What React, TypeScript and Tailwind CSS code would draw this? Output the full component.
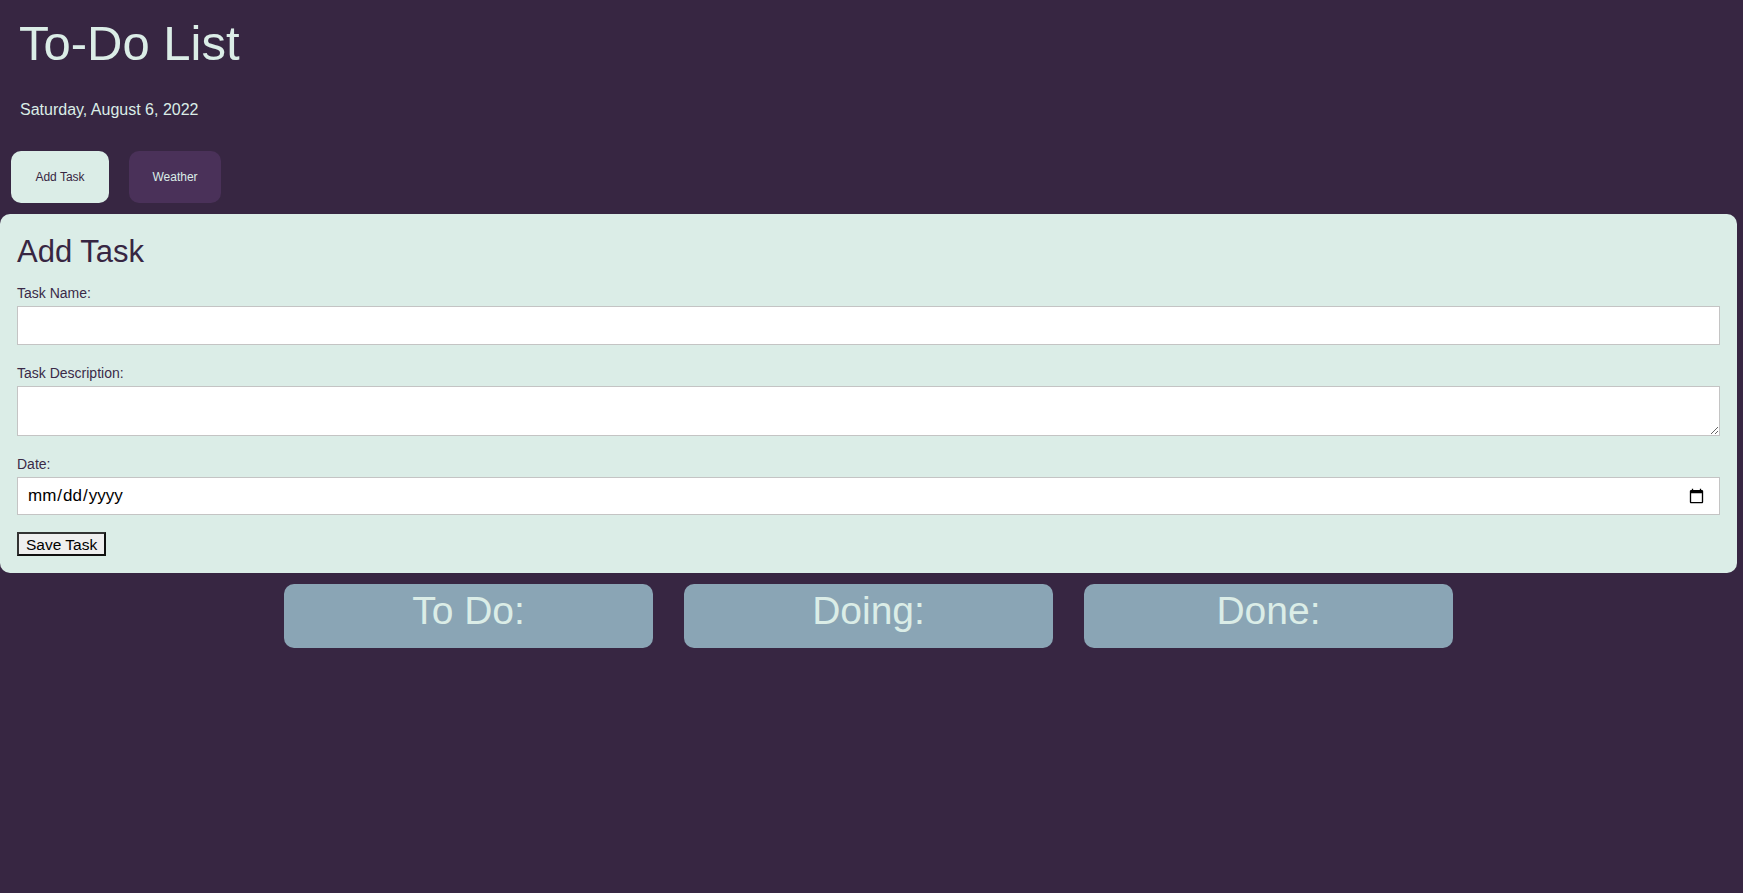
const font = { fontFamily: '"Liberation Sans", Arial, sans-serif' }

const columns = ['To Do:', 'Doing:', 'Done:']

function Field({ label, children, first }: { label: string; children: React.ReactNode; first?: boolean }) {
  return (
    <div className={first ? 'mt-[16px] flex flex-col' : 'mt-[20px] flex flex-col'}>
      <label className="text-[14px] leading-[16px] text-[#3a2a47]">{label}</label>
      <div className="mt-[5px]">{children}</div>
    </div>
  )
}

export default function App() {
  return (
    <div className="min-h-screen w-full bg-[#372642]" style={font}>
      <div className="w-[1737px] flex flex-col">
        <h1 className="mt-[15px] pl-[19px] text-[49px] leading-[56px] text-[#dbede7]">To-Do List</h1>
        <p className="mt-[30px] pl-[20px] text-[16px] leading-[18px] text-[#dbede7]">Saturday, August 6, 2022</p>

        <div className="mt-[32px] pl-[11px] flex gap-[20px]">
          <button className="h-[52px] w-[98px] rounded-[10px] bg-[#dbede7] text-[12px] text-[#372642]">Add Task</button>
          <button className="h-[52px] w-[92px] rounded-[10px] bg-[#4a3159] text-[12px] text-[#dbede7]">Weather</button>
        </div>

        <div className="mt-[11px] rounded-[10px] bg-[#dbede7] px-[17px] pt-[21px] pb-[16px] flex flex-col">
          <h2 className="text-[31px] leading-[34px] text-[#372642]">Add Task</h2>

          <Field label="Task Name:" first>
            <input type="text" className="block h-[39px] w-full border border-[#c4c4c4] bg-white px-2 text-[15px]" />
          </Field>

          <Field label="Task Description:">
            <textarea className="block h-[50px] w-full border border-[#c4c4c4] bg-white px-2 text-[15px]" />
          </Field>

          <Field label="Date:">
            <input
              type="date"
              className="block h-[38px] w-full border border-[#c4c4c4] bg-white pl-[9px] pr-[12px] text-[17px] text-black"
            />
          </Field>

          <div className="mt-[17px]">
            <button className="h-[24px] border-2 border-t-[#333] border-l-[#333] border-b-[#111] border-r-[#111] bg-[#efefef] px-[7px] text-[15.5px] leading-[17px] text-black">
              Save Task
            </button>
          </div>
        </div>

        <div className="mt-[11px] flex justify-center gap-[31px]">
          {columns.map((c) => (
            <div key={c} className="h-[64px] w-[369px] rounded-[10px] bg-[#8aa5b5] pt-[3px] text-center text-[39px] leading-[48px] text-[#dbede7]">
              {c}
            </div>
          ))}
        </div>
      </div>
    </div>
  )
}
